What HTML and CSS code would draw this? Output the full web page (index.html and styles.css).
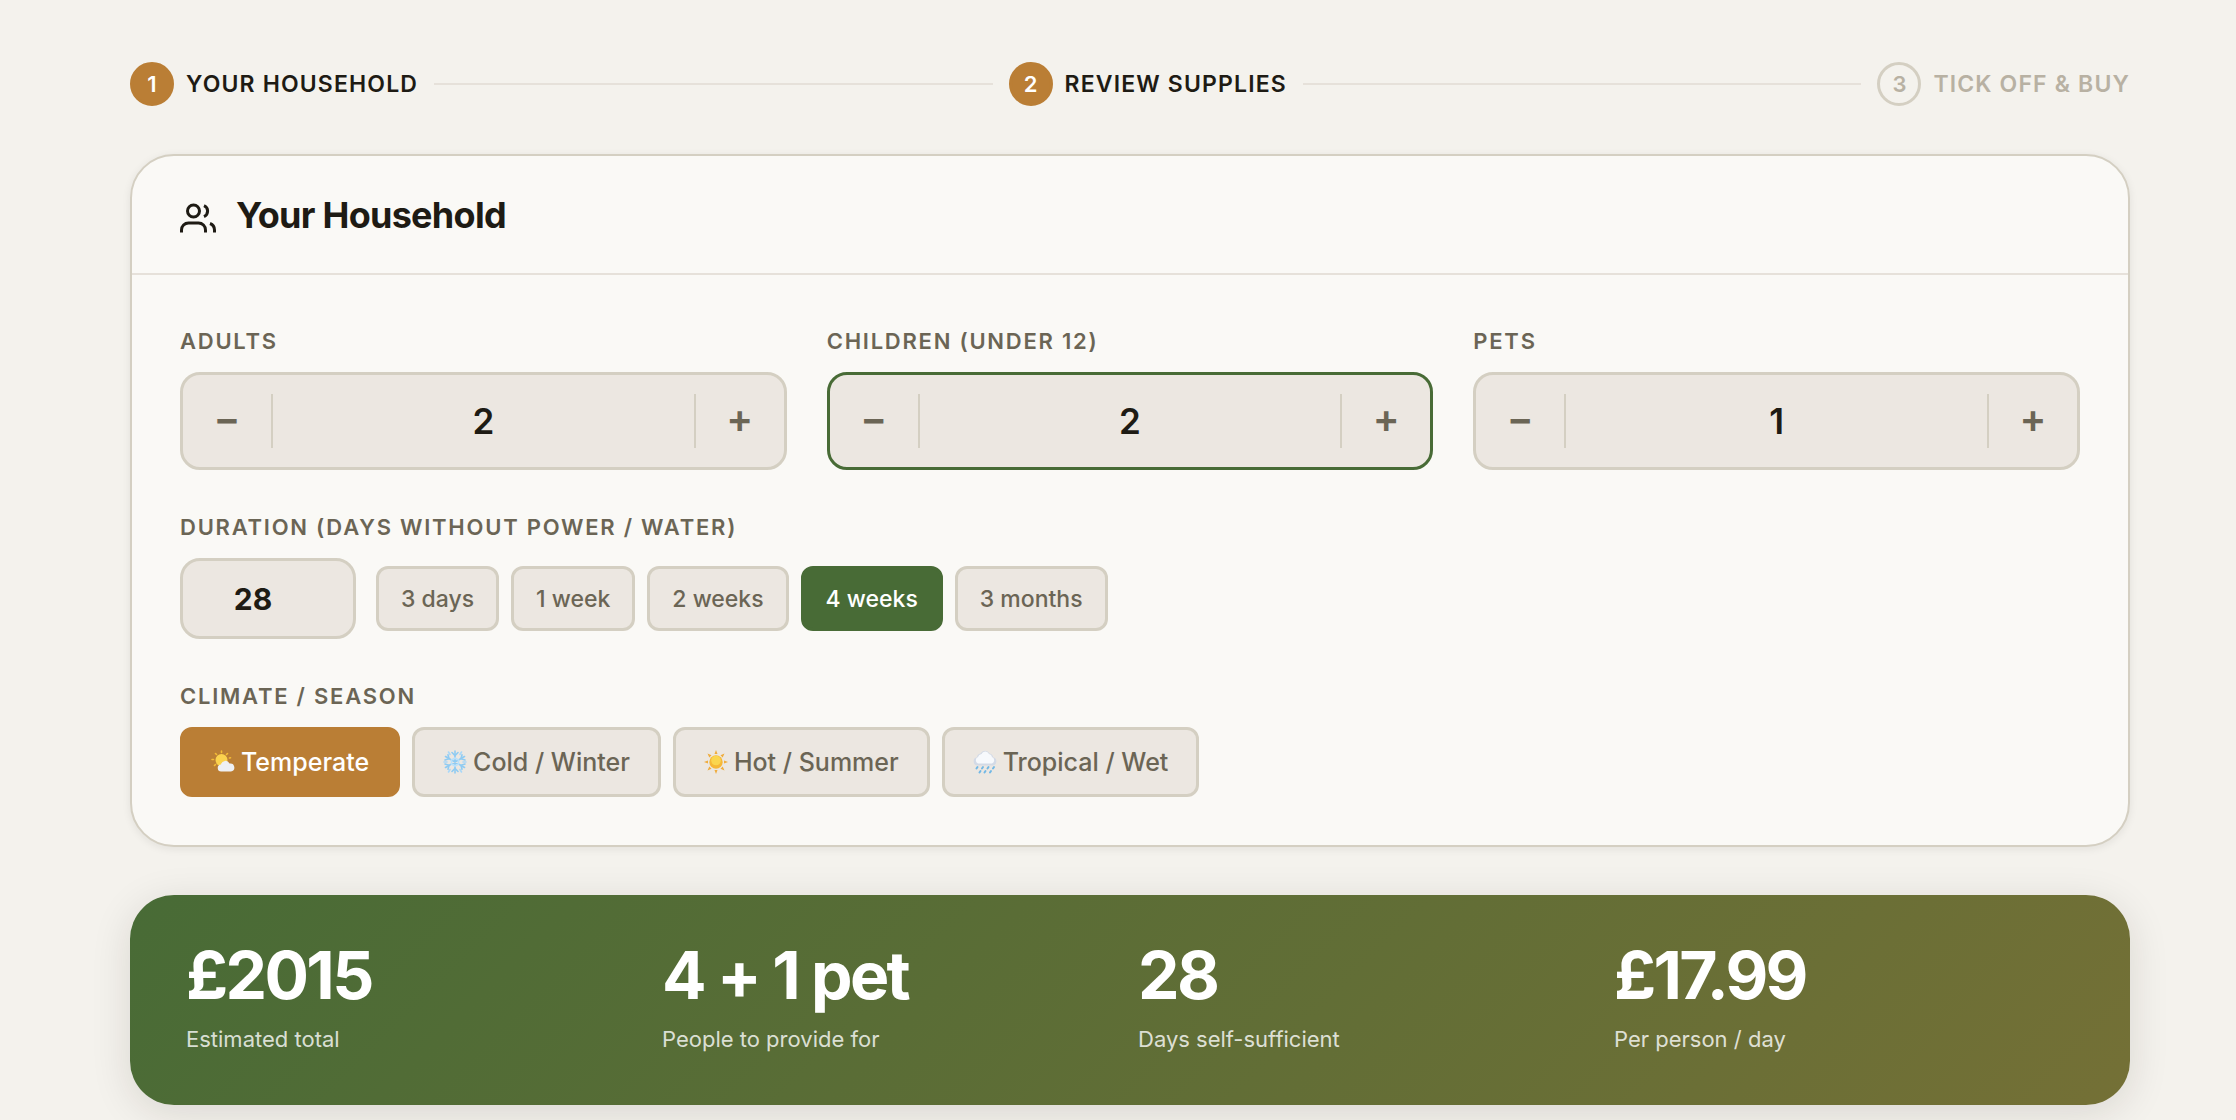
FILE: index.html
```html
<!DOCTYPE html>
<html lang="en">
<head>
<meta charset="UTF-8" />
<meta name="viewport" content="width=device-width, initial-scale=1" />
<title>Household Supplies Planner</title>
<link rel="stylesheet" href="styles.css">
</head>
<body>
  <main class="container">
    <ol class="steps">
      <li class="step done"><span class="step-num">1</span>Your household</li>
      <li class="step-line" aria-hidden="true"></li>
      <li class="step done"><span class="step-num">2</span>Review supplies</li>
      <li class="step-line" aria-hidden="true"></li>
      <li class="step"><span class="step-num">3</span>Tick off &amp; buy</li>
    </ol>

    <section class="card">
      <header class="card-header">
        <svg class="card-icon" viewBox="0 0 36 36" fill="none" stroke="currentColor" stroke-width="3">
          <circle cx="13.500" cy="13" r="6" />
          <path d="M1.500 34.500v-2.500a7 7 0 0 1 7-7h10a7 7 0 0 1 7 7v2.500" />
          <path d="M24 7.500a6 6 0 0 1 0 11" />
          <path d="M30 25.500a7 7 0 0 1 4.500 6.500v2.500" />
        </svg>
        <h2>Your Household</h2>
      </header>

      <div class="card-body">
        <div class="counters">
          <div class="field">
            <label for="adults">Adults</label>
            <div class="counter">
              <button type="button" class="counter-btn" data-step="-1" aria-label="Fewer adults">−</button>
              <input id="adults" type="text" inputmode="numeric" value="2">
              <button type="button" class="counter-btn" data-step="1" aria-label="More adults">+</button>
            </div>
          </div>
          <div class="field">
            <label for="children">Children (under 12)</label>
            <div class="counter active">
              <button type="button" class="counter-btn" data-step="-1" aria-label="Fewer children">−</button>
              <input id="children" type="text" inputmode="numeric" value="2">
              <button type="button" class="counter-btn" data-step="1" aria-label="More children">+</button>
            </div>
          </div>
          <div class="field">
            <label for="pets">Pets</label>
            <div class="counter">
              <button type="button" class="counter-btn" data-step="-1" aria-label="Fewer pets">−</button>
              <input id="pets" type="text" inputmode="numeric" value="1">
              <button type="button" class="counter-btn" data-step="1" aria-label="More pets">+</button>
            </div>
          </div>
        </div>

        <div class="field">
          <label for="days">Duration (days without power / water)</label>
          <div class="duration">
            <input id="days" class="days-input" type="number" min="1" value="28">
            <div class="options">
              <button type="button" class="chip">3 days</button>
              <button type="button" class="chip">1 week</button>
              <button type="button" class="chip">2 weeks</button>
              <button type="button" class="chip selected">4 weeks</button>
              <button type="button" class="chip">3 months</button>
            </div>
          </div>
        </div>

        <div class="field">
          <span class="field-label" id="climate-label">Climate / season</span>
          <div class="options" role="group" aria-labelledby="climate-label">
            <button type="button" class="climate selected">
              <svg class="weather" viewBox="0 0 24 24">
                <g stroke="#f3bb35" stroke-width="1.600" stroke-linecap="round">
                  <path d="M10.500 1v1.500M4.500 3.500l1 1M16.500 3.500l-1 1M1 9.500h1.500M3.500 15.500l1-1M18.500 8l1-.3" />
                </g>
                <circle cx="10.500" cy="10" r="6" fill="#fbd24e" />
                <path d="M10.500 21.500a3.500 3.500 0 0 1-.5-7 4.500 4.500 0 0 1 8.500-1 3.800 3.800 0 0 1 1.500 8z" fill="#eef0f4" />
              </svg>
              Temperate
            </button>
            <button type="button" class="climate">
              <svg class="weather" viewBox="0 0 24 24" fill="none" stroke="#8fcbf2" stroke-width="1.600" stroke-linecap="round">
                <path d="M12 1v22M2.500 6.500l19 11M21.500 6.500l-19 11" />
                <path d="M9 2.500l3 3 3-3M9 21.500l3-3 3 3M2 10l4-1.200-1-4M22 10l-4-1.200 1-4M2 14l4 1.200-1 4M22 14l-4 1.200 1 4" />
                <path d="M5.500 2l1.500 2.500M18.500 2L17 4.500M5.500 22L7 19.500M18.500 22L17 19.500M1 12h3M20 12h3" stroke="#a9d8f8" />
                <path d="M12 8l3.500 2v4L12 16l-3.500-2v-4z" stroke="#b9e0fa" />
              </svg>
              Cold / Winter
            </button>
            <button type="button" class="climate">
              <svg class="weather" viewBox="0 0 24 24">
                <path d="M12 0l1.500 4h-3zM12 24l1.500-4h-3zM0 12l4-1.500v3zM24 12l-4-1.500v3zM3.500 3.500l4 1.800-2.200 2.200zM20.500 3.500l-4 1.800 2.200 2.200zM3.500 20.500l4-1.800-2.200-2.200zM20.500 20.500l-4-1.800 2.200-2.200z" fill="#efac3c" />
                <circle cx="12" cy="12" r="6.700" fill="#f6b837" />
                <circle cx="12" cy="10.500" r="4.800" fill="#fad64f" />
              </svg>
              Hot / Summer
            </button>
            <button type="button" class="climate">
              <svg class="weather" viewBox="0 0 24 24">
                <path d="M4.500 15.500a4.200 4.200 0 0 1-.5-8.300 4 4 0 0 1 3.500-3.700 5 5 0 0 1 9 0 4 4 0 0 1 3.500 3.700 4.200 4.200 0 0 1-.5 8.300z" fill="#d3dae6" />
                <path d="M5 13.500a3.500 3.500 0 0 1 0-6.500 4 4 0 0 1 3.500-3 4 4 0 0 1 7.500 0 3.500 3.500 0 0 1 3 3 3.500 3.500 0 0 1 0 6.500z" fill="#f7f9fc" />
                <path d="M4.500 17l-1 1.500M10 17l-1 1.500M15.500 17l-1 1.500M21 17l-1 1.500M7.500 21l-1 1.500M12.500 21l-1 1.500M18 21l-1 1.500" stroke="#72b8e6" stroke-width="2" stroke-linecap="round" />
              </svg>
              Tropical / Wet
            </button>
          </div>
        </div>
      </div>
    </section>

    <section class="summary">
      <div class="stat">
        <div class="stat-value">£2015</div>
        <div class="stat-label">Estimated total</div>
      </div>
      <div class="stat">
        <div class="stat-value">4 + 1 pet</div>
        <div class="stat-label">People to provide for</div>
      </div>
      <div class="stat">
        <div class="stat-value">28</div>
        <div class="stat-label">Days self-sufficient</div>
      </div>
      <div class="stat">
        <div class="stat-value">£17.99</div>
        <div class="stat-label">Per person / day</div>
      </div>
    </section>
  </main>

<script>
document.querySelectorAll('.counter-btn').forEach(btn => {
  btn.addEventListener('click', () => {
    const input = btn.parentElement.querySelector('input');
    input.value = Math.max(0, Number(input.value) + Number(btn.dataset.step));
  });
});

document.querySelectorAll('.options').forEach(group => {
  group.addEventListener('click', e => {
    const btn = e.target.closest('button');
    if (!btn) return;
    group.querySelectorAll('button').forEach(b => b.classList.toggle('selected', b === btn));
  });
});
</script>
</body>
</html>
```
FILE: styles.css
```css
:root {
  --bg: #f4f2ed;
  --card: #faf9f6;
  --field: #ece7e1;
  --border: #d4cfc2;
  --line: #e6e1da;
  --text: #1e1b14;
  --muted: #6b6555;
  --faint: #b8b1a3;
  --green: #486b36;
  --amber: #ba7e35;
}
* { box-sizing: border-box; }
body {
  margin: 0;
  background: var(--bg);
  color: var(--text);
  font-family: Inter, "Liberation Sans", sans-serif;
  font-size: 22px;
  line-height: 32px;
}
button, input {
  font: inherit;
  color: inherit;
  margin: 0;
}
button { cursor: pointer; }
.container { padding: 62px 106px 48px 130px; }

/* Steps */
.steps {
  display: flex;
  align-items: center;
  gap: 16px;
  margin: 0 0 48px;
  padding: 0;
  list-style: none;
}
.step {
  display: flex;
  align-items: center;
  gap: 12px;
  font-size: 23px;
  font-weight: 600;
  letter-spacing: 0.05em;
  text-transform: uppercase;
  white-space: nowrap;
  color: var(--faint);
}
.step-num {
  display: flex;
  align-items: center;
  justify-content: center;
  width: 44px;
  height: 44px;
  border: 3px solid var(--border);
  border-radius: 50%;
  font-size: 22px;
  letter-spacing: 0;
}
.step.done { color: var(--text); }
.step.done .step-num {
  background: var(--amber);
  border-color: var(--amber);
  color: #fff;
}
.step-line {
  flex: 1;
  height: 2px;
  background: var(--line);
}

/* Household card */
.card {
  background: var(--card);
  border: 2px solid var(--border);
  border-radius: 44px;
  box-shadow: 0 2px 8px rgba(30, 27, 20, 0.08);
}
.card-header {
  display: flex;
  align-items: center;
  gap: 20px;
  padding: 36px 48px 34px;
  border-bottom: 2px solid var(--line);
}
.card-header h2 {
  margin: 0;
  font-size: 36px;
  line-height: 47px;
  font-weight: 700;
  letter-spacing: -0.02em;
}
.card-icon {
  width: 36px;
  height: 36px;
}
.card-body {
  display: flex;
  flex-direction: column;
  gap: 41px;
  padding: 50px 48px 48px;
}
.counters {
  display: grid;
  grid-template-columns: repeat(3, minmax(0, 1fr));
  gap: 40px;
}
.field label, .field-label {
  display: block;
  margin-bottom: 15px;
  font-size: 22px;
  font-weight: 600;
  letter-spacing: 0.08em;
  text-transform: uppercase;
  color: var(--muted);
}
.counter {
  display: flex;
  align-items: center;
  height: 98px;
  background: var(--field);
  border: 3px solid var(--border);
  border-radius: 20px;
}
.counter.active { border-color: var(--green); }
.counter input {
  flex: 1;
  width: 0;
  min-width: 0;
  padding: 0;
  border: none;
  outline: none;
  background: none;
  font-size: 35px;
  line-height: 48px;
  font-weight: 600;
  text-align: center;
}
.counter-btn {
  width: 90px;
  height: 54px;
  padding: 0 0 4px;
  border: none;
  background: none;
  font-size: 40px;
  font-weight: 600;
  line-height: 48px;
  color: var(--muted);
}
.counter-btn:first-child { border-right: 2px solid var(--border); }
.counter-btn:last-child { border-left: 2px solid var(--border); }

/* Duration and climate */
.duration {
  display: flex;
  align-items: center;
  flex-wrap: wrap;
  gap: 20px;
}
.days-input {
  width: 176px;
  height: 81px;
  padding: 0 46px 0 16px;
  background: var(--field);
  border: 3px solid var(--border);
  border-radius: 20px;
  font-size: 30px;
  font-weight: 700;
  text-align: center;
  appearance: textfield;
}
.days-input::-webkit-inner-spin-button { display: none; }
.options {
  display: flex;
  flex-wrap: wrap;
  gap: 12px;
}
.chip, .climate {
  display: flex;
  align-items: center;
  background: var(--field);
  border: 3px solid var(--border);
  border-radius: 12px;
  color: var(--muted);
}
.chip {
  height: 65px;
  padding: 0 22px;
  font-size: 23px;
  font-weight: 500;
}
.climate {
  gap: 6px;
  height: 70px;
  padding: 0 28px;
  font-size: 25px;
  font-weight: 500;
}
.chip.selected {
  background: var(--green);
  border-color: var(--green);
  color: #fff;
}
.climate.selected {
  background: var(--amber);
  border-color: var(--amber);
  color: #fff;
}
.weather {
  width: 24px;
  height: 24px;
}

/* Totals */
.summary {
  display: grid;
  grid-template-columns: repeat(4, 1fr);
  gap: 16px;
  margin-top: 48px;
  padding: 48px 56px;
  border-radius: 44px;
  background: linear-gradient(135deg, #486b36, #747036);
  box-shadow: 0 8px 40px rgba(30, 27, 20, 0.12);
  color: #fff;
}
.stat-value {
  font-size: 66px;
  line-height: 64px;
  font-weight: 700;
  letter-spacing: -0.04em;
}
.stat-label {
  margin-top: 14px;
  line-height: 36px;
  color: rgba(255, 255, 255, 0.8);
}
```
